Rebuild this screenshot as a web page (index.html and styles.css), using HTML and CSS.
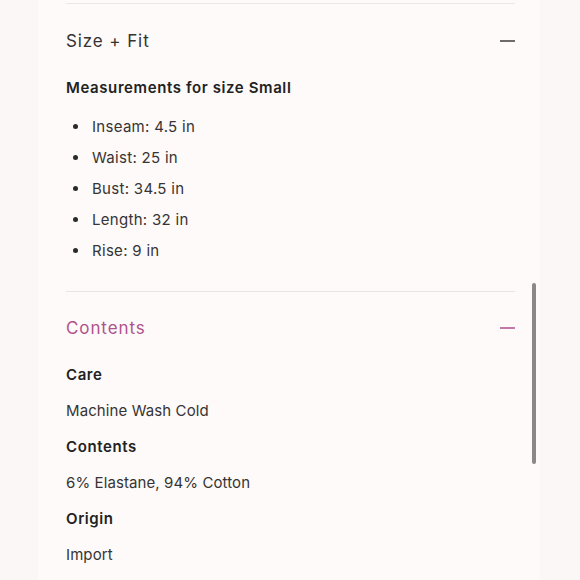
FILE: index.html
```html
<!DOCTYPE html>
<html>
<head>
<meta charset="utf-8">
<link rel="stylesheet" href="styles.css">
</head>
<body>
<div class="page">
  <div class="panel">
    <div class="prev"></div>
    <section class="acc">
      <div class="acc-head">
        <span class="acc-title">Size + Fit</span>
        <span class="minus"></span>
      </div>
      <div class="sub">Measurements for size Small</div>
      <ul class="list">
        <li>Inseam: 4.5 in</li>
        <li>Waist: 25 in</li>
        <li>Bust: 34.5 in</li>
        <li>Length: 32 in</li>
        <li>Rise: 9 in</li>
      </ul>
    </section>
    <section class="acc active">
      <div class="acc-head">
        <span class="acc-title">Contents</span>
        <span class="minus"></span>
      </div>
      <div class="row b">Care</div>
      <div class="row">Machine Wash Cold</div>
      <div class="row b">Contents</div>
      <div class="row">6% Elastane, 94% Cotton</div>
      <div class="row b">Origin</div>
      <div class="row">Import</div>
    </section>
  </div>
  <div class="scrollbar"></div>
</div>
</body>
</html>
```
FILE: styles.css
```css
html, body {
  margin: 0;
  padding: 0;
}
body {
  background: #fbf7f6;
  font-family: "Inter", "Liberation Sans", sans-serif;
  color: #333;
  width: 580px;
  height: 580px;
  overflow: hidden;
}
.page {
  position: relative;
  height: 580px;
}
.panel {
  margin-left: 38px;
  width: 502px;
  height: 580px;
  background: #fdfaf9;
  box-sizing: border-box;
  padding: 0 25px 0 28px;
}
.prev {
  height: 3px;
  border-bottom: 1px solid #ebe7e6;
}
.acc {
  display: flex;
  flex-direction: column;
}
.acc:first-of-type {
  padding-bottom: 25px;
  border-bottom: 1px solid #e8e4e3;
}
.acc-head {
  height: 74px;
  display: flex;
  align-items: center;
  justify-content: space-between;
}
.active .acc-head {
  height: 72px;
}
.acc-title {
  font-size: 17px;
  letter-spacing: 0.9px;
  color: #333;
}
.minus {
  width: 15px;
  height: 2px;
  background: #6f6b6b;
}
.active .acc-title {
  color: #b0528d;
}
.active .minus {
  background: #c07aa8;
}
.sub {
  font-size: 15px;
  font-weight: 600;
  line-height: 20px;
  letter-spacing: 0.6px;
  color: #222;
}
.list {
  list-style: none;
  margin: 13px 0 0;
  padding: 0;
}
.list li {
  display: flex;
  align-items: center;
  height: 31px;
  font-size: 15px;
  letter-spacing: 0.3px;
  color: #363434;
}
.list li::before {
  content: "";
  width: 5px;
  height: 5px;
  border-radius: 50%;
  background: #2a2a2a;
  margin-left: 7px;
  margin-right: 14px;
}
.row {
  font-size: 15px;
  line-height: 22px;
  margin-bottom: 14px;
  letter-spacing: 0.1px;
  color: #363434;
}
.row.b {
  font-weight: 600;
  color: #222;
  letter-spacing: 0.6px;
}
.scrollbar {
  position: absolute;
  left: 532px;
  top: 283px;
  width: 4px;
  height: 181px;
  border-radius: 2px;
  background: #8a8888;
}
```
